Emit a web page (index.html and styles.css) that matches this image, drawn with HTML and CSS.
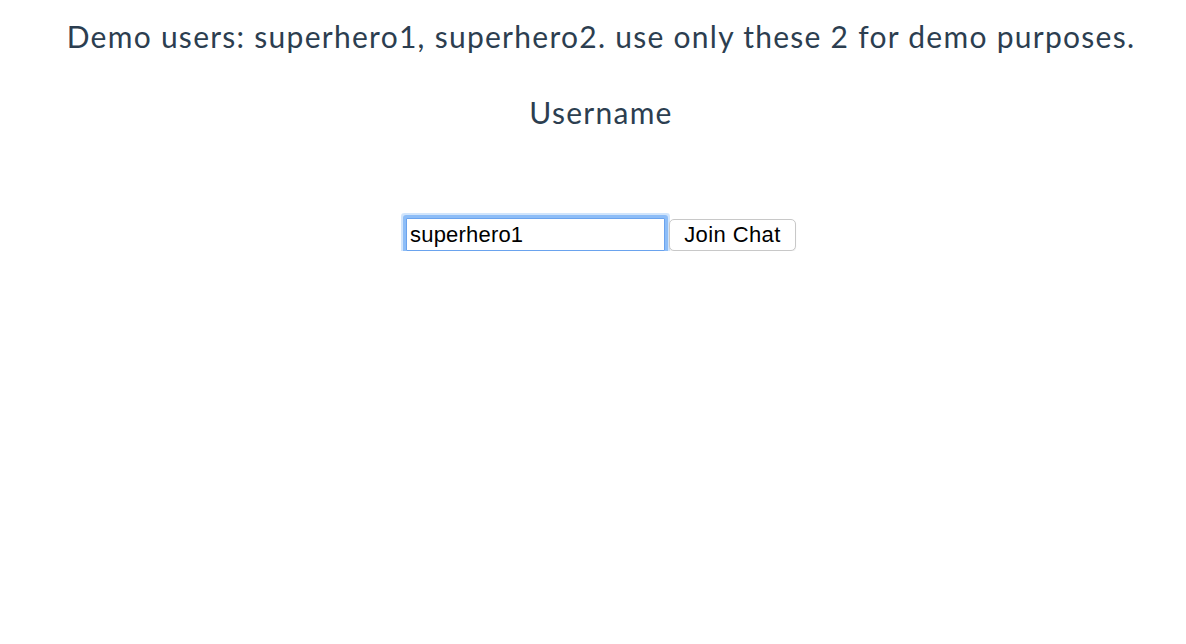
FILE: index.html
```html
<!DOCTYPE html>
<html>
<head>
<meta charset="utf-8">
<link rel="stylesheet" href="styles.css">
</head>
<body>
<div class="app">
  <p class="note">Demo users: superhero1, superhero2. use only these 2 for demo purposes.</p>
  <p class="label">Username</p>
  <form class="join">
    <input class="name" type="text" value="superhero1">
    <button class="btn" type="button">Join Chat</button>
  </form>
</div>
</body>
</html>
```
FILE: styles.css
```css
html, body {
  margin: 0;
  background: #ffffff;
}
.app {
  padding-left: 16px;
  text-align: center;
  color: #2c3e50;
  font-family: Lato, "Noto Sans", sans-serif;
  letter-spacing: 1.27px;
}
.note {
  margin: 0;
  padding-top: 16px;
  font-size: 30px;
  line-height: 40px;
  font-weight: 400;
}
.label {
  margin: 0;
  padding-top: 36px;
  font-size: 30px;
  line-height: 40px;
}
.join {
  display: flex;
  justify-content: center;
  align-items: center;
  gap: 4px;
  margin-top: 86px;
  letter-spacing: 0;
}
.name {
  box-sizing: border-box;
  width: 259px;
  height: 33px;
  margin: 0;
  padding: 0 3px;
  border: 1px solid #6aa3ee;
  border-radius: 1px;
  box-shadow: 0 0 0 3px #8dbdf7, 0 0 0 5px rgba(141, 189, 247, 0.4);
  outline: none;
  font-family: "Liberation Sans", Arial, sans-serif;
  font-size: 22px;
  letter-spacing: 0.2px;
  color: #000;
  background: #fff;
}
.btn {
  box-sizing: border-box;
  width: 127px;
  height: 32px;
  margin: 0;
  padding: 0;
  border: 1px solid #c8c8c8;
  border-radius: 5px;
  background: #fff;
  box-shadow: 0 1px 1px rgba(0,0,0,0.08);
  font-family: "Liberation Sans", Arial, sans-serif;
  font-size: 22px;
  letter-spacing: 0.4px;
  color: #000;
}
```
